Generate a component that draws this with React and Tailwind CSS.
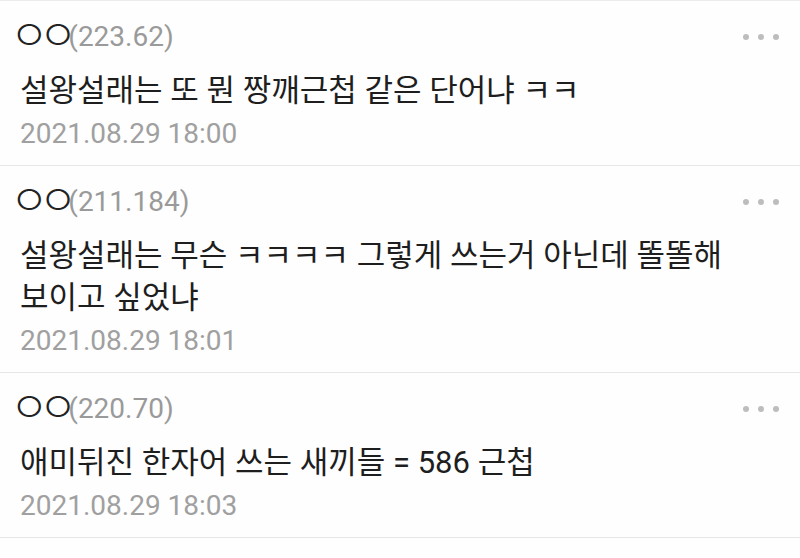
const comments = [
  {
    id: 1,
    nick: 'ㅇㅇ',
    ip: '223.62',
    body: '설왕설래는 또 뭔 짱깨근첩 같은 단어냐 ㅋㅋ',
    date: '2021.08.29 18:00',
  },
  {
    id: 2,
    nick: 'ㅇㅇ',
    ip: '211.184',
    body: '설왕설래는 무슨 ㅋㅋㅋㅋ 그렇게 쓰는거 아닌데 똘똘해 보이고 싶었냐',
    date: '2021.08.29 18:01',
  },
  {
    id: 3,
    nick: 'ㅇㅇ',
    ip: '220.70',
    body: '애미뒤진 한자어 쓰는 새끼들 = 586 근첩',
    date: '2021.08.29 18:03',
  },
];

const font = { fontFamily: 'Roboto, "Noto Sans CJK KR", sans-serif' };

function MoreDots() {
  return (
    <div className="flex items-center gap-[9px]">
      <span className="w-[6px] h-[6px] rounded-full bg-[#bdbdbd]" />
      <span className="w-[6px] h-[6px] rounded-full bg-[#bdbdbd]" />
      <span className="w-[6px] h-[6px] rounded-full bg-[#bdbdbd]" />
    </div>
  );
}

export default function App() {
  return (
    <div className="w-[800px] h-[558px] overflow-hidden bg-[#fefefe] border-t border-[#ececec]" style={font}>
      {comments.map((c) => (
        <div key={c.id} className="pl-[20px] pr-[21px] pt-[16px] pb-[11px] border-b border-[#e6e6e6]">
          <div className="flex items-center justify-between h-[40px]">
            <p className="flex items-center leading-[40px] whitespace-nowrap">
              <span className="inline-block ml-[-10px] text-[42px] font-light text-[#222] tracking-[-10px] translate-y-[-1px]">{c.nick}</span>
              <span className="ml-[1px] text-[28px] text-[#9a9a9a]">({c.ip})</span>
            </p>
            <MoreDots />
          </div>
          <p className="mt-[13px] text-[31px] leading-[42px] text-[#1e1e1e] pr-[40px] break-keep">{c.body}</p>
          <p className="mt-[2px] text-[28px] leading-[40px] text-[#a0a0a0]">{c.date}</p>
        </div>
      ))}
    </div>
  );
}
